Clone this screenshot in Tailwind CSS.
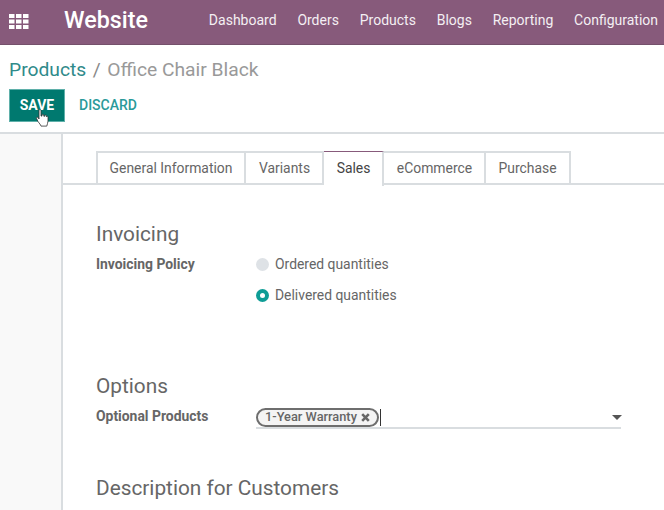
<!DOCTYPE html>
<html lang="en">
<head>
<meta charset="UTF-8">
<title>Website</title>
<script src="https://cdn.jsdelivr.net/npm/@tailwindcss/browser@4"></script>
</head>
<body class="w-[664px] h-[510px] overflow-hidden bg-white font-['Roboto',sans-serif] text-[13.9px] text-[#666]">
  <!-- Navbar -->
  <header class="h-[45px] bg-[#875a7b] border-b border-[#74506b] flex items-center text-white">
    <svg class="ml-[9px] mb-[1px] w-5 h-[15px]" viewBox="0 0 20 15" fill="#fff">
      <rect x="0" y="0" width="5.5" height="4"/><rect x="7" y="0" width="5.5" height="4"/><rect x="14" y="0" width="5.5" height="4"/>
      <rect x="0" y="5.5" width="5.5" height="4"/><rect x="7" y="5.5" width="5.5" height="4"/><rect x="14" y="5.5" width="5.5" height="4"/>
      <rect x="0" y="11" width="5.5" height="4"/><rect x="7" y="11" width="5.5" height="4"/><rect x="14" y="11" width="5.5" height="4"/>
    </svg>
    <span class="ml-[35px] mb-[3px] text-[23.3px] font-medium leading-none">Website</span>
    <nav class="ml-auto mr-[6px] mb-[3px] flex gap-[20.8px] text-[14px] text-[#f4eff3]">
      <span>Dashboard</span><span>Orders</span><span>Products</span><span>Blogs</span><span>Reporting</span><span>Configuration</span>
    </nav>
  </header>

  <!-- Control panel -->
  <div class="h-[89px] border-b-2 border-[#d9dde0] px-[9px]">
    <div class="pt-[13px] flex gap-[6.5px] text-[19.25px] leading-[24px] text-[#999]">
      <span class="text-[#2f8a8a]">Products</span><span class="text-[#888]">/</span><span>Office Chair Black</span>
    </div>
    <div class="mt-[7px] flex items-center">
      <button class="relative w-[56px] h-[33px] bg-[#00796f] border border-[#5fb0aa] text-white text-[14px] font-bold">SAVE
        <svg class="absolute left-[26px] top-[19px] w-[13px] h-[18px]" viewBox="0 0 13 18">
          <path d="M3 1.5c0-1.2 2-1.2 2 0V7l1 .1V6c0-1 1.7-1 1.8 0v1.2l.9.1V6.7c0-.9 1.6-.9 1.7.1v1c0-.7 1.6-.7 1.6.3v4c0 2-1 3-1.2 5H5c-.5-1.600-1.500-2.500-3-4.500L.6 9.500c-.6-1 .8-1.800 1.500-.9L3 10z" fill="#fff" stroke="#333" stroke-width=".8"/>
        </svg>
      </button>
      <span class="ml-[14px] text-[14px] font-medium text-[#2a9a9a]">DISCARD</span>
    </div>
  </div>

  <div class="flex h-[376px]">
    <aside class="w-[63px] shrink-0 bg-[#f9f9f9] border-r-2 border-[#d9dde0]"></aside>
    <main class="flex-1 min-w-0">
      <!-- Tabs -->
      <div class="mt-[17px] h-[34px] border-b-2 border-[#d9dde0] pl-[33px] flex text-[#666]">
        <div class="w-[150px] h-[34px] pb-[2px] border-2 border-b-0 border-[#d9dde0] flex items-center justify-center">General Information</div>
        <div class="w-[78px] h-[34px] pb-[2px] pl-[1px] border-2 border-l-0 border-b-0 border-[#d9dde0] flex items-center justify-center">Variants</div>
        <div class="w-[60px] h-[35px] pb-[1px] pl-[1px] border-t border-[#875a7b] border-r-2 border-r-[#d9dde0] bg-white text-[#444] flex items-center justify-center">Sales</div>
        <div class="w-[102px] h-[34px] pb-[2px] pl-[1px] border-2 border-l-0 border-b-0 border-[#d9dde0] flex items-center justify-center">eCommerce</div>
        <div class="w-[85px] h-[34px] pb-[2px] border-2 border-l-0 border-b-0 border-[#d9dde0] flex items-center justify-center">Purchase</div>
      </div>

      <div class="pl-[33px] pr-[43px]">
        <h2 class="mt-[36px] text-[20.8px] leading-[26px] text-[#666]">Invoicing</h2>
        <div class="mt-[4px] flex">
          <div class="w-[160px] font-bold text-[#666] leading-[26px]">Invoicing Policy</div>
          <div class="flex flex-col gap-[5px]">
            <label class="h-[26px] flex items-center gap-[6px]"><span class="w-[13px] h-[13px] rounded-full bg-[#dee2e6]"></span>Ordered quantities</label>
            <label class="h-[26px] flex items-center gap-[6px]"><span class="w-[13px] h-[13px] rounded-full bg-[#0f9d96] flex items-center justify-center"><span class="w-[5px] h-[5px] rounded-full bg-white"></span></span>Delivered quantities</label>
          </div>
        </div>

        <h2 class="mt-[65px] text-[20.8px] leading-[26px] text-[#666]">Options</h2>
        <div class="mt-[4px] flex">
          <div class="w-[160px] font-bold text-[#666] leading-[26px]">Optional Products</div>
          <div class="flex-1 h-[26px] pt-[4px] border-b-2 border-[#d9dde0] flex items-center relative">
            <span class="h-[19px] w-[123px] justify-center rounded-full border-2 border-[#6e6e6e] bg-[#f4f4f4] text-[12.8px] font-medium flex items-center gap-[4px] leading-none">1-Year Warranty <svg class="w-[9px] h-[9px]" viewBox="0 0 9 9"><path d="M1.200 1.200 7.800 7.800M7.800 1.200 1.200 7.800" stroke="#666" stroke-width="2.600"/></svg></span>
            <span class="ml-[1px] w-px h-[17px] bg-[#333]"></span>
            <span class="absolute right-[-1px] top-[12px] w-0 h-0 border-x-[5px] border-x-transparent border-t-[5px] border-t-[#555]"></span>
          </div>
        </div>

        <h2 class="mt-[46px] text-[20.8px] leading-[26px] text-[#666]">Description for Customers</h2>
      </div>
    </main>
  </div>
</body>
</html>
